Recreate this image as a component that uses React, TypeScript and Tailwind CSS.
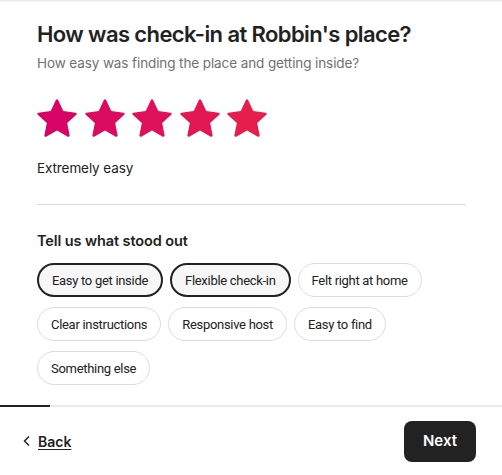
import { useState } from 'react';

const starColors = [
  'fill-[#D70466]',
  'fill-[#DB0B60]',
  'fill-[#DF115A]',
  'fill-[#E21853]',
  'fill-[#E61E4D]',
];

const tags = [
  'Easy to get inside',
  'Flexible check-in',
  'Felt right at home',
  'Clear instructions',
  'Responsive host',
  'Easy to find',
  'Something else',
];

function Star({ className }: { className: string }) {
  return (
    <svg viewBox="0 0 32 32" className={`h-10 w-10 ${className}`}>
      <path d="M15.094 1.579l-4.124 8.885-9.86 1.27a1 1 0 0 0-.542 1.736l7.293 6.565-1.965 9.852a1 1 0 0 0 1.483 1.061L16 25.951l8.625 4.997a1 1 0 0 0 1.482-1.06l-1.965-9.853 7.293-6.565a1 1 0 0 0-.541-1.735l-9.86-1.271-4.127-8.885a1 1 0 0 0-1.814 0z" />
    </svg>
  );
}

export default function App() {
  const [selected, setSelected] = useState<string[]>(['Easy to get inside', 'Flexible check-in']);

  const toggle = (tag: string) => {
    setSelected((prev) => (prev.includes(tag) ? prev.filter((t) => t !== tag) : [...prev, tag]));
  };

  return (
    <div className="flex h-[475px] w-[502px] flex-col bg-white font-['Inter',sans-serif] text-[#222222]">
      {/* top edge shadow */}
      <div className="h-[3px] bg-gradient-to-b from-[#e8e8e8] to-white" />

      {/* Content */}
      <div className="flex-1 pl-[37px] pr-[36px] pt-[16px]">
        <h1 className="text-[22px] font-semibold leading-[30px] tracking-[-0.6px]">
          How was check-in at Robbin's place?
        </h1>
        <p className="mt-[4px] text-[13.5px] leading-[20px] tracking-[-0.1px] text-[#717171]">
          How easy was finding the place and getting inside?
        </p>

        <div className="mt-[25px] flex gap-[7.5px]">
          {starColors.map((c, i) => (
            <Star key={i} className={c} />
          ))}
        </div>

        <p className="mt-[20px] text-[13.5px] leading-[20px] tracking-[-0.1px]">Extremely easy</p>

        <div className="mt-[26px] h-px bg-[#dddddd]" />

        <h2 className="mt-[26px] text-[14.5px] font-semibold leading-[20px] tracking-[-0.1px]">
          Tell us what stood out
        </h2>

        <div className="mt-[12px] flex flex-wrap gap-x-[7px] gap-y-[10px] font-['Roboto',sans-serif]">
          {tags.map((tag) => {
            const on = selected.includes(tag);
            return (
              <button
                key={tag}
                onClick={() => toggle(tag)}
                className={`h-[34px] rounded-full px-[13px] text-[13px] leading-none tracking-[-0.3px] ${
                  on ? 'border-2 border-[#222222] bg-[#f7f7f7]' : 'border border-[#dddddd] bg-white'
                }`}
              >
                {tag}
              </button>
            );
          })}
        </div>
      </div>

      {/* Progress */}
      <div className="h-[2px] bg-[#ebebeb]">
        <div className="h-full w-[50px] bg-[#222222]" />
      </div>

      {/* Footer */}
      <div className="flex h-[68px] items-center justify-between pl-[23px] pr-[26px]">
        <button className="flex items-center gap-[7px] text-[14px] font-semibold">
          <svg viewBox="0 0 8 12" className="h-[12px] w-[8px] fill-none stroke-[#222222] stroke-[1.5]">
            <path d="M6 1.5 1.5 6 6 10.5" />
          </svg>
          <span className="underline underline-offset-2">Back</span>
        </button>
        <button className="h-[41px] w-[72px] rounded-lg bg-[#222222] text-[15px] font-semibold text-white">
          Next
        </button>
      </div>
    </div>
  );
}
